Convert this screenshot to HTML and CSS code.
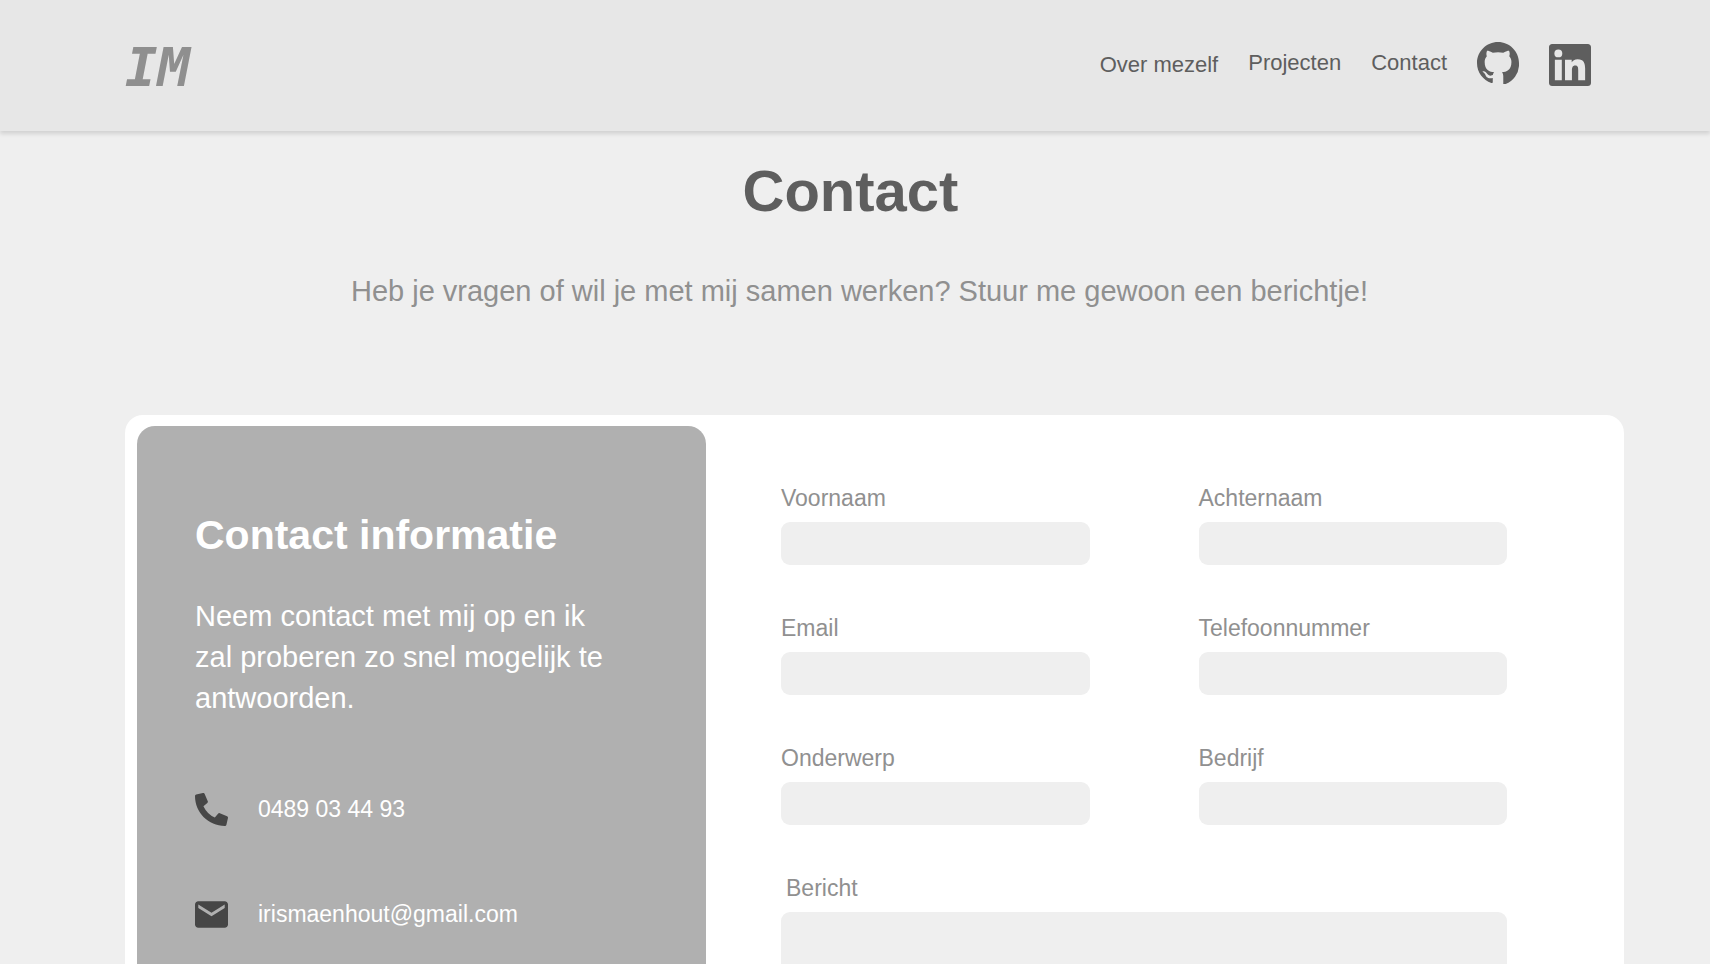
FILE: index.html
```html
<!DOCTYPE html>
<html lang="nl">
<head>
  <meta charset="utf-8">
  <meta name="viewport" content="width=device-width, initial-scale=1">
  <title>Contact</title>
  <link rel="stylesheet" href="styles.css">
</head>
<body>
  <header class="site-header">
    <a class="logo" href="#">IM</a>
    <nav class="nav">
      <a class="nav-link nav-link-about" href="#">Over mezelf</a>
      <a class="nav-link" href="#">Projecten</a>
      <a class="nav-link" href="#">Contact</a>
      <a class="social" href="#" aria-label="GitHub">
        <svg class="social-icon" viewBox="0 0 16 16" aria-hidden="true"><path d="M8 0C3.58 0 0 3.58 0 8c0 3.54 2.29 6.53 5.47 7.59.4.07.55-.17.55-.38 0-.19-.01-.82-.01-1.49-2.01.37-2.53-.49-2.69-.94-.09-.23-.48-.94-.82-1.13-.28-.15-.68-.52-.01-.53.63-.01 1.08.58 1.23.82.72 1.21 1.87.87 2.33.66.07-.52.28-.87.51-1.07-1.78-.2-3.64-.89-3.64-3.95 0-.87.31-1.59.82-2.15-.08-.2-.36-1.02.08-2.12 0 0 .67-.21 2.2.82.64-.18 1.32-.27 2-.27s1.36.09 2 .27c1.53-1.04 2.2-.82 2.2-.82.44 1.1.16 1.92.08 2.12.51.56.82 1.27.82 2.15 0 3.07-1.87 3.75-3.65 3.95.29.25.54.73.54 1.48v3.28A8.01 8.01 0 0 0 16 8c0-4.42-3.58-8-8-8z"/></svg>
      </a>
      <a class="social social-linkedin" href="#" aria-label="LinkedIn">
        <svg class="social-icon" viewBox="0 0 24 24" aria-hidden="true"><path d="M20.647 20.652h-3.954v-5.569c0-1.328-.027-2.837-1.652-2.837-1.653 0-1.936 1.245-1.936 2.739v5.667H9.151V9h3.814v1.461h.046c.477-.9 1.637-1.75 3.37-1.75 3.601 0 4.267 2.37 4.267 5.455v6.486zM5.337 7.633a2.262 2.262 0 1 1 0-4.528 2.262 2.262 0 0 1 0 4.528zm1.982 13.019H3.355V9h3.964v11.652zM22.225 0H1.771C.792 0 0 .774 0 1.729v20.542C0 23.227.792 24 1.771 24h20.451C23.2 24 24 23.227 24 22.271V1.729C24 .774 23.2 0 22.222 0h.003z"/></svg>
      </a>
    </nav>
  </header>

  <main class="page">
    <h1 class="page-title">Contact</h1>
    <p class="page-intro">Heb je vragen of wil je met mij samen werken? Stuur me gewoon een berichtje!</p>

    <section class="card">
      <div class="info">
        <h2 class="info-title">Contact informatie</h2>
        <p class="info-text">Neem contact met mij op en ik zal proberen zo snel mogelijk te antwoorden.</p>
        <a class="info-item" href="tel:0489034493">
          <svg class="info-icon" viewBox="0 0 512 512" aria-hidden="true"><path d="M497.39 361.8l-112-48a24 24 0 0 0-28 6.9l-49.6 60.6A370.66 370.66 0 0 1 130.6 204.11l60.6-49.6a23.94 23.94 0 0 0 6.9-28l-48-112A24.16 24.16 0 0 0 122.6.61l-104 24A24 24 0 0 0 0 48c0 256.5 207.9 464 464 464a24 24 0 0 0 23.4-18.6l24-104a24.29 24.29 0 0 0-14.01-27.6z"/></svg>
          <span>0489 03 44 93</span>
        </a>
        <a class="info-item" href="mailto:irismaenhout@gmail.com">
          <svg class="info-icon" viewBox="2 2 20 20" aria-hidden="true"><path d="M20 4H4c-1.1 0-1.99.9-1.99 2L2 18c0 1.1.9 2 2 2h16c1.1 0 2-.9 2-2V6c0-1.1-.9-2-2-2zm0 4l-8 5-8-5V6l8 5 8-5v2z"/></svg>
          <span>irismaenhout@gmail.com</span>
        </a>
      </div>

      <form class="form">
        <div class="field">
          <label class="label" for="voornaam">Voornaam</label>
          <input class="input" id="voornaam" type="text">
        </div>
        <div class="field">
          <label class="label" for="achternaam">Achternaam</label>
          <input class="input" id="achternaam" type="text">
        </div>
        <div class="field">
          <label class="label" for="email">Email</label>
          <input class="input" id="email" type="email">
        </div>
        <div class="field">
          <label class="label" for="telefoon">Telefoonnummer</label>
          <input class="input" id="telefoon" type="tel">
        </div>
        <div class="field">
          <label class="label" for="onderwerp">Onderwerp</label>
          <input class="input" id="onderwerp" type="text">
        </div>
        <div class="field">
          <label class="label" for="bedrijf">Bedrijf</label>
          <input class="input" id="bedrijf" type="text">
        </div>
        <div class="field field-wide">
          <label class="label label-message" for="bericht">Bericht</label>
          <textarea class="input input-message" id="bericht"></textarea>
        </div>
      </form>
    </section>
  </main>
</body>
</html>
```
FILE: styles.css
```css
* {
  box-sizing: border-box;
}

body {
  display: flex;
  flex-direction: column;
  height: 100vh;
  margin: 0;
  background: #efefef;
  color: #5e5e5e;
  font-family: "Liberation Sans", Arial, sans-serif;
}

a {
  color: inherit;
  text-decoration: none;
}

.site-header {
  position: relative;
  z-index: 1;
  display: flex;
  justify-content: space-between;
  align-items: flex-start;
  flex: none;
  height: 131px;
  padding: 40px 119px 0 125px;
  background: #e7e7e7;
  box-shadow: 0 3px 4px rgba(0, 0, 0, 0.12);
}

.logo {
  color: #8f8f8f;
  font: italic bold 54px/56px "DejaVu Sans Mono", monospace;
}

.nav {
  display: flex;
  align-items: flex-start;
  gap: 30px;
}

.nav-link {
  padding-top: 11px;
  font-size: 22px;
  line-height: 24px;
}

.nav-link-about {
  padding-top: 13px;
}

.social {
  display: block;
  padding-top: 2px;
}

.social-linkedin {
  padding-top: 4px;
}

.social-icon {
  display: block;
  width: 42px;
  height: 42px;
  fill: #5e5e5e;
}

.page {
  flex: 1;
  min-height: 0;
  padding: 27px 86px 40px 125px;
  overflow-y: auto;
  scrollbar-width: none;
}

.page-title {
  margin: 0;
  padding-right: 48px;
  font-size: 58px;
  line-height: 66px;
  text-align: center;
}

.page-intro {
  margin: 50px 0 0;
  padding-right: 30px;
  color: #909090;
  font-size: 29px;
  line-height: 34px;
  text-align: center;
}

.card {
  display: grid;
  grid-template-columns: 569fr 906fr;
  margin-top: 107px;
  padding: 11px 12px;
  border-radius: 18px;
  background: #fff;
}

.info {
  padding: 85px 58px 60px;
  border-radius: 18px;
  background: #b0b0b0;
  color: #fff;
}

.info-title {
  margin: 0;
  font-size: 41px;
  line-height: 48px;
}

.info-text {
  max-width: 420px;
  margin: 37px 0 74px;
  font-size: 29px;
  line-height: 41px;
}

.info-item {
  display: flex;
  align-items: center;
  gap: 30px;
  margin-bottom: 72px;
  font-size: 23px;
  line-height: 33px;
}

.info-icon {
  width: 33px;
  height: 33px;
  fill: #464646;
}

.form {
  display: grid;
  grid-template-columns: 1fr 1fr;
  align-content: start;
  gap: 50px 109px;
  padding: 59px 105px 60px 75px;
}

.field {
  display: flex;
  flex-direction: column;
  gap: 11px;
}

.field-wide {
  grid-column: 1 / -1;
}

.label {
  color: #909090;
  font-size: 23px;
  line-height: 26px;
}

.label-message {
  padding-left: 5px;
}

.input {
  width: 100%;
  height: 43px;
  padding: 0 12px;
  border: 0;
  border-radius: 9px;
  background: #efefef;
  color: #5e5e5e;
  font: inherit;
}

.input-message {
  height: 180px;
  padding: 12px;
  resize: none;
}
```
